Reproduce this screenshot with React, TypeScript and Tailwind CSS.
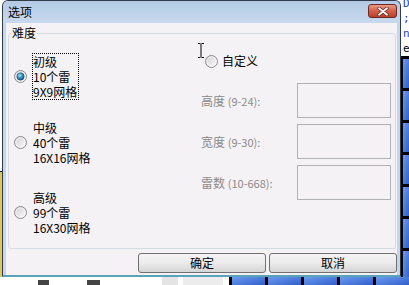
const LEVELS = [
  { id: 'easy', name: '初级', mines: '10个雷', grid: '9X9网格', checked: true, gap: 'mt-[13px]' },
  { id: 'mid', name: '中级', mines: '40个雷', grid: '16X16网格', checked: false, gap: 'mt-[19px]' },
  { id: 'hard', name: '高级', mines: '99个雷', grid: '16X30网格', checked: false, gap: 'mt-[23px]' },
];

const FIELDS = [
  { name: '高度', range: '(9-24):' },
  { name: '宽度', range: '(9-30):' },
  { name: '雷数', range: '(10-668):' },
];

function Radio({ id, checked = false }: { id: string; checked?: boolean }) {
  return (
    <svg width="13" height="13" viewBox="0 0 13 13" className="block shrink-0">
      <defs>
        <linearGradient id={`rb-${id}`} x1="0" y1="0" x2="1" y2="1">
          <stop offset="0" stopColor="#cfcfcf" />
          <stop offset="1" stopColor="#fcfcfc" />
        </linearGradient>
        <radialGradient id={`rd-${id}`} cx="0.4" cy="0.35" r="0.7">
          <stop offset="0" stopColor="#b2e6fc" />
          <stop offset="0.5" stopColor="#3b8dc2" />
          <stop offset="1" stopColor="#0d4873" />
        </radialGradient>
      </defs>
      <circle cx="6.5" cy="6.5" r="6" fill={`url(#rb-${id})`} stroke="#8c8c8c" />
      <circle cx="6.5" cy="6.5" r="4.6" fill="none" stroke="#ffffff" strokeOpacity="0.6" />
      {checked && (
        <circle cx="6.5" cy="6.5" r="3.7" fill={`url(#rd-${id})`} stroke="#1a4f75" strokeWidth="0.6" />
      )}
    </svg>
  );
}

function CloseButton() {
  return (
    <div className="mt-[3px] ml-auto flex h-[14px] w-[29px] items-center justify-center rounded-[3px] border border-[#6e2a1f] bg-linear-to-b from-[#e79a86] via-[#d2604a] to-[#b8402c]">
      <svg width="12" height="9" viewBox="0 0 12 9">
        <path d="M2 1.2 L10 7.8 M10 1.2 L2 7.8" stroke="#5a2018" strokeWidth="3.2" strokeLinecap="round" />
        <path d="M2 1.2 L10 7.8 M10 1.2 L2 7.8" stroke="#ffffff" strokeWidth="1.8" strokeLinecap="round" />
      </svg>
    </div>
  );
}

function Dialog() {
  return (
    <div className="flex h-[277px] w-[399px] flex-col rounded-t-[6px] border-x border-t border-[#2e3c4c] border-b-2 border-b-[#58a3b7] bg-[#c4d6eb]">
      {/* Title bar */}
      <div className="flex h-[22px] items-start rounded-t-[5px] bg-linear-to-b from-[#b4cae5] to-[#c8d9ee] pr-[3px] pl-[5px]">
        <span className="mt-[4px] leading-[14px]">选项</span>
        <CloseButton />
      </div>

      {/* Client area */}
      <div className="mx-[3px] flex flex-1 flex-col bg-[#f5f2f5]">
        <fieldset className="mt-[3px] mr-[1px] ml-[2px] h-[223px] rounded-[3px] border border-[#d3dce3]">
          <legend className="ml-[2px] px-[1px] leading-[14px]">难度</legend>
          <div className="flex">
            {/* Presets */}
            <div className="flex w-[190px] flex-col pl-[5px]">
              {LEVELS.map((l) => (
                <div key={l.id} className={`flex items-center gap-[5px] ${l.gap}`}>
                  <Radio id={l.id} checked={l.checked} />
                  <div
                    className={`flex flex-col border border-dotted pr-[1px] leading-[15px] ${
                      l.checked ? 'border-black' : 'border-transparent'
                    }`}
                  >
                    <span>{l.name}</span>
                    <span>{l.mines}</span>
                    <span>{l.grid}</span>
                  </div>
                </div>
              ))}
            </div>

            {/* Custom */}
            <div className="flex flex-col">
              <div className="mt-[14px] ml-[6px] flex items-center gap-[4px] leading-[14px]">
                <Radio id="custom" />
                <span>自定义</span>
              </div>
              <div className="mt-[15px] flex flex-col gap-[6px]">
                {FIELDS.map((f) => (
                  <div key={f.name} className="flex items-center">
                    <span className="w-[98px] pl-[2px] text-[#8a8a8a]">
                      {f.name} <span className="text-[11px]">{f.range}</span>
                    </span>
                    <div className="h-[35px] w-[94px] border border-[#aeb2b6] bg-[#f5f2f5]" />
                  </div>
                ))}
              </div>
            </div>
          </div>
        </fieldset>

        {/* Buttons */}
        <div className="mt-[4px] flex justify-end gap-[3px]">
          {['确定', '取消'].map((t) => (
            <div
              key={t}
              className="flex h-[20px] w-[128px] items-center justify-center rounded-[3px] border border-[#707070] bg-linear-to-b from-[#f4f4f4] via-[#ebebeb] to-[#d5d5d5] leading-[14px]"
            >
              {t}
            </div>
          ))}
        </div>
      </div>
    </div>
  );
}

function Tiles({ vertical }: { vertical?: boolean }) {
  const n = vertical ? 7 : 5;
  return (
    <div className={`flex ${vertical ? 'flex-col' : 'flex-row'} flex-1 bg-black`}>
      {Array.from({ length: n }).map((_, i) => (
        <div
          key={i}
          className={`bg-linear-to-br from-[#6d9bf0] to-[#2f5fc9] ${
            vertical ? 'mt-[3px] ml-[2px] h-[29px]' : 'ml-[3px] h-full w-[33px]'
          }`}
        />
      ))}
    </div>
  );
}

export default function App() {
  return (
    <div className="relative h-[285px] w-[409px] overflow-hidden bg-white font-['Noto_Sans_CJK_SC','Noto_Sans',sans-serif] text-[12px] text-black">
      <div className="flex h-[277px]">
        {/* desktop behind, left */}
        <div className="flex w-[2px] flex-col">
          <div className="h-[171px] bg-white" />
          <div className="h-[1px] bg-black" />
          <div className="flex-1 bg-[#e2c45a]" />
        </div>

        <Dialog />

        {/* desktop behind, right */}
        <div className="flex w-[8px] flex-col overflow-hidden">
          <div className="flex h-[66px] flex-col pl-[2px] font-['DejaVu_Sans_Mono',monospace] text-[11px] leading-[15px] text-[#1f3fb0]">
            <span className="-mt-[4px]">D</span>
            <span>;</span>
            <span>n</span>
            <span className="text-black">e</span>
          </div>
          <Tiles vertical />
        </div>
      </div>

      {/* desktop behind, bottom */}
      <div className="flex h-[8px]">
        <div className="w-[42px]" />
        <div className="mt-[3px] h-[5px] w-[12px] bg-[#444]" />
        <div className="w-[42px]" />
        <div className="mt-[3px] h-[5px] w-[14px] bg-[#444]" />
        <div className="w-[68px]" />
        <div className="h-full w-[18px] bg-[#e4e4e4]" />
        <div className="w-[5px]" />
        <div className="h-full w-[44px] bg-[#ececec]" />
        <div className="w-[7px]" />
        <Tiles />
      </div>

      {/* I-beam mouse cursor */}
      <svg className="absolute top-[43px] left-[198px]" width="6" height="15" viewBox="0 0 6 15">
        <path d="M0 0.5H2.5M3.5 0.5H6M3 1V14M0 14.5H2.5M3.5 14.5H6" stroke="#000" strokeWidth="1" fill="none" />
      </svg>
    </div>
  );
}
